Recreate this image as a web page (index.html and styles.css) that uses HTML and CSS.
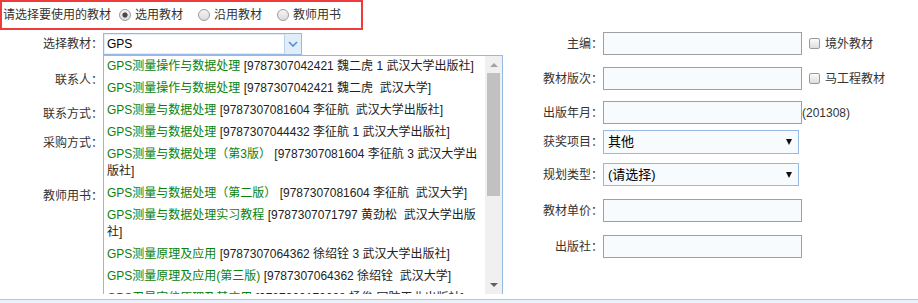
FILE: index.html
```html
<!DOCTYPE html>
<html lang="zh-CN">
<head>
<meta charset="utf-8">
<title>选择教材</title>
<link rel="stylesheet" href="styles.css">
</head>
<body>
<div class="page">
  <div class="topbar">
    <span class="prompt">请选择要使用的教材</span>
    <label class="opt first"><span class="radio checked"></span><span>选用教材</span></label>
    <label class="opt"><span class="radio"></span><span>沿用教材</span></label>
    <label class="opt"><span class="radio"></span><span>教师用书</span></label>
  </div>
  <div class="form">
    <div class="col-left">
      <div class="lrow r1">
        <span class="lab">选择教材：</span>
        <div class="combo">
          <span class="combo-text">GPS</span>
          <span class="combo-btn"><svg width="10" height="6" viewBox="0 0 10 6"><polyline points="1,1 5,5 9,1" fill="none" stroke="#4f8fd8" stroke-width="1.6"/></svg></span>
          <div class="popup">
            <div class="items">
              <div class="item"><span class="t">GPS测量操作与数据处理</span> [9787307042421 魏二虎 1 武汉大学出版社]</div>
              <div class="item"><span class="t">GPS测量操作与数据处理</span> [9787307042421 魏二虎&nbsp; 武汉大学]</div>
              <div class="item"><span class="t">GPS测量与数据处理</span> [9787307081604 李征航&nbsp; 武汉大学出版社]</div>
              <div class="item"><span class="t">GPS测量与数据处理</span> [9787307044432 李征航 1 武汉大学出版社]</div>
              <div class="item"><span class="t">GPS测量与数据处理（第3版）</span> [9787307081604 李征航 3 武汉大学出版社]</div>
              <div class="item"><span class="t">GPS测量与数据处理（第二版）</span> [9787307081604 李征航&nbsp; 武汉大学]</div>
              <div class="item"><span class="t">GPS测量与数据处理实习教程</span> [9787307071797 黄劲松&nbsp; 武汉大学出版社]</div>
              <div class="item"><span class="t">GPS测量原理及应用</span> [9787307064362 徐绍铨 3 武汉大学出版社]</div>
              <div class="item"><span class="t">GPS测量原理及应用(第三版)</span> [9787307064362 徐绍铨&nbsp; 武汉大学]</div>
              <div class="item"><span class="t">GPS卫星定位原理及其应用</span> [9787302172628 杨俊 国防工业出版社]</div>
            </div>
            <div class="sbar">
              <div class="sb-btn"><span class="arrow-up"></span></div>
              <div class="thumb"></div>
              <div class="sb-space"></div>
              <div class="sb-btn down"><span class="arrow-down"></span></div>
            </div>
          </div>
        </div>
      </div>
      <div class="lrow r2"><span class="lab">联系人：</span></div>
      <div class="lrow r3"><span class="lab">联系方式：</span></div>
      <div class="lrow r4"><span class="lab">采购方式：</span></div>
      <div class="lrow r5"><span class="lab">教师用书：</span></div>
    </div>
    <div class="col-right">
      <div class="rrow rr1">
        <span class="rlab">主编：</span>
        <span class="field"></span>
        <label class="chk"><span class="box"></span><span>境外教材</span></label>
      </div>
      <div class="rrow rr2">
        <span class="rlab">教材版次：</span>
        <span class="field"></span>
        <label class="chk"><span class="box"></span><span>马工程教材</span></label>
      </div>
      <div class="rrow rr3">
        <span class="rlab">出版年月：</span>
        <span class="field"></span>
        <span class="hint">(201308)</span>
      </div>
      <div class="rrow rr4">
        <span class="rlab">获奖项目：</span>
        <span class="sel tall"><span>其他</span><span class="sel-arrow"></span></span>
      </div>
      <div class="rrow rr5">
        <span class="rlab">规划类型：</span>
        <span class="sel"><span>(请选择)</span><span class="sel-arrow"></span></span>
      </div>
      <div class="rrow rr6">
        <span class="rlab">教材单价：</span>
        <span class="field"></span>
      </div>
      <div class="rrow rr7">
        <span class="rlab">出版社：</span>
        <span class="field"></span>
      </div>
    </div>
  </div>
  <div class="band"></div>
</div>
</body>
</html>
```

FILE: styles.css
```css
* { box-sizing: border-box; }
html, body { margin: 0; padding: 0; background: #fff; }
body {
  font-family: "Liberation Sans", "Noto Sans CJK SC", sans-serif;
  font-size: 12px;
  color: #333;
  width: 918px;
  height: 303px;
  overflow: hidden;
}
.page { display: flex; flex-direction: column; height: 303px; }

/* top choice bar */
.topbar {
  display: flex;
  align-items: center;
  width: 363px;
  height: 30px;
  flex: none;
  border: 2px solid #ee3b3b;
  padding-left: 1px;
  line-height: 16px;
}
.opt { display: flex; align-items: center; margin-left: 15px; }
.opt.first { margin-left: 8px; }
.radio {
  width: 12px;
  height: 12px;
  border-radius: 50%;
  border: 1px solid #9c9c9c;
  background: linear-gradient(#f4f4f4, #dcdcdc);
  margin-right: 4px;
  flex: none;
}
.radio.checked {
  background: radial-gradient(circle, #4a4a4a 0 2.2px, rgba(74,74,74,0) 3px), linear-gradient(#f4f4f4, #dcdcdc);
}

/* form */
.form { display: flex; height: 269px; flex: none; }
.col-left { width: 502px; flex: none; display: flex; flex-direction: column; }
.lrow { display: flex; align-items: center; height: 22px; flex: none; }
.lab { width: 103px; flex: none; text-align: right; line-height: 16px; }
.r1 { margin-top: 3px; }
.r2 { margin-top: 14px; }
.r3 { margin-top: 12px; }
.r4 { margin-top: 7px; }
.r5 { margin-top: 31px; }

.combo {
  position: relative;
  display: flex;
  width: 199px;
  height: 22px;
  border: 1px solid #95b8e7;
  box-shadow: inset 0 0 0 1px #e2edfa;
  background: #fff;
}
.combo-text { flex: 1; padding-left: 3px; line-height: 20px; color: #000; }
.combo-btn {
  width: 17px;
  flex: none;
  background: #e2edfa;
  border-left: 1px solid #b9d1ef;
  display: flex;
  align-items: center;
  justify-content: center;
}

.popup {
  position: absolute;
  left: -1px;
  top: 21px;
  width: 400px;
  height: 239px;
  border: 1px solid #95b8e7;
  border-bottom: 0;
  background: #fff;
  display: flex;
  overflow: hidden;
  z-index: 2;
}
.items { flex: 1; overflow: hidden; }
.item { padding: 2px 0 3px 3px; line-height: 17px; color: #222; }
.t { color: #0a820a; }
.sbar { width: 17px; flex: none; background: #f0f0f0; display: flex; flex-direction: column; }
.sb-btn { height: 17px; flex: none; display: flex; align-items: center; justify-content: center; }
.sb-btn.down { margin-bottom: 1px; }
.thumb { height: 123px; flex: none; margin: 0 2px; background: #c1c1c1; }
.sb-space { flex: 1; }
.arrow-up {
  width: 0; height: 0;
  border-left: 4px solid transparent;
  border-right: 4px solid transparent;
  border-bottom: 4px solid #a3a3a3;
}
.arrow-down {
  width: 0; height: 0;
  border-left: 4px solid transparent;
  border-right: 4px solid transparent;
  border-top: 4px solid #606060;
}

/* right column */
.col-right { flex: 1; display: flex; flex-direction: column; }
.rrow { display: flex; align-items: center; flex: none; }
.rlab { width: 101px; flex: none; text-align: right; line-height: 16px; }
.field {
  width: 199px;
  height: 23px;
  flex: none;
  border: 1px solid #a0a0a0;
  background: #f7fbfd;
}
.sel {
  width: 196px;
  height: 23px;
  flex: none;
  border: 1px solid #95b8e7;
  background: #f7fbfd;
  display: flex;
  align-items: center;
  justify-content: space-between;
  padding: 0 6px 0 4px;
  font-size: 13px;
  line-height: 16px;
  color: #000;
}
.sel.tall { height: 24px; }
.sel-arrow {
  width: 0; height: 0;
  border-left: 3px solid transparent;
  border-right: 3px solid transparent;
  border-top: 6px solid #111;
}
.chk { display: flex; align-items: center; margin-left: 7px; line-height: 16px; }
.box {
  width: 11px;
  height: 11px;
  border: 1px solid #9a9a9a;
  border-radius: 2px;
  background: linear-gradient(#fbfbfb, #dedede);
  margin-right: 5px;
  flex: none;
}
.hint { line-height: 16px; }
.rr1 { margin-top: 2px; }
.rr2 { margin-top: 12px; }
.rr3 { margin-top: 11px; }
.rr4 { margin-top: 6px; }
.rr5 { margin-top: 9px; }
.rr6 { margin-top: 13px; }
.rr7 { margin-top: 13px; }

.band {
  height: 4px;
  flex: none;
  border-top: 1px solid #a9c8ee;
  background: #e9f1fb;
}
```
